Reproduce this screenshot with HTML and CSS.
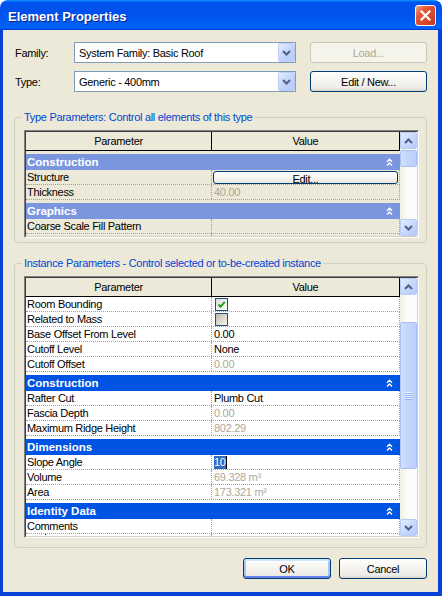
FILE: index.html
```html
<!DOCTYPE html>
<html>
<head>
<meta charset="utf-8">
<title>Element Properties</title>
<link rel="stylesheet" href="styles.css">
</head>
<body>
<div class="window">
  <div class="titlebar">
    <span class="title">Element Properties</span>
    <span class="close">
      <svg width="11" height="11" viewBox="0 0 11 11"><path d="M1.5 1.5 L9.5 9.5 M9.5 1.5 L1.5 9.5" stroke="#fff" stroke-width="2.2" stroke-linecap="square" fill="none"/></svg>
    </span>
  </div>
  <div class="client">
    <div class="form">
      <span class="lbl">Family:</span>
      <div class="combo">
        <span class="combo-text">System Family: Basic Roof</span>
        <span class="drop"><svg width="9" height="6" viewBox="0 0 9 6"><path d="M1 1 L4.5 4.5 L8 1" stroke="#4D6185" stroke-width="2" fill="none"/></svg></span>
      </div>
      <button class="btn disabled">Load...</button>
      <span class="lbl">Type:</span>
      <div class="combo">
        <span class="combo-text">Generic - 400mm</span>
        <span class="drop"><svg width="9" height="6" viewBox="0 0 9 6"><path d="M1 1 L4.5 4.5 L8 1" stroke="#4D6185" stroke-width="2" fill="none"/></svg></span>
      </div>
      <button class="btn">Edit / New...</button>
    </div>

    <fieldset class="group type-group">
      <legend>Type Parameters: Control all elements of this type</legend>
      <div class="grid">
        <div class="grid-inner">
          <div class="table readonly">
            <div class="hdr"><div class="hc">Parameter</div><div class="hc">Value</div></div>
            <div class="cat inactive"><span>Construction</span><svg width="7" height="8" viewBox="0 0 7 8"><path d="M1 3.8 L3.5 1.3 L6 3.8 M1 7.5 L3.5 5 L6 7.5" stroke="#fff" stroke-width="1.4" fill="none"/></svg></div>
            <div class="row"><div class="pc">Structure</div><div class="vc vc-btn"><span class="cellbtn">Edit...</span></div></div>
            <div class="row"><div class="pc">Thickness</div><div class="vc dis">40.00</div></div>
            <div class="cat inactive"><span>Graphics</span><svg width="7" height="8" viewBox="0 0 7 8"><path d="M1 3.8 L3.5 1.3 L6 3.8 M1 7.5 L3.5 5 L6 7.5" stroke="#fff" stroke-width="1.4" fill="none"/></svg></div>
            <div class="row"><div class="pc">Coarse Scale Fill Pattern</div><div class="vc"></div></div>
            <div class="row"><div class="pc"></div><div class="vc"></div></div>
          </div>
          <div class="vscroll">
            <div class="sb-btn"><svg width="9" height="6" viewBox="0 0 9 6"><path d="M1 5 L4.5 1.5 L8 5" stroke="#4D6185" stroke-width="2" fill="none"/></svg></div>
            <div class="thumb thumb-type"></div>
            <div class="sb-fill"></div>
            <div class="sb-btn"><svg width="9" height="6" viewBox="0 0 9 6"><path d="M1 1 L4.5 4.5 L8 1" stroke="#4D6185" stroke-width="2" fill="none"/></svg></div>
          </div>
        </div>
      </div>
    </fieldset>

    <fieldset class="group inst-group">
      <legend>Instance Parameters - Control selected or to-be-created instance</legend>
      <div class="grid">
        <div class="grid-inner">
          <div class="table">
            <div class="hdr"><div class="hc">Parameter</div><div class="hc">Value</div></div>
            <div class="row"><div class="pc">Room Bounding</div><div class="vc"><span class="chk checked"><svg width="11" height="11" viewBox="0 0 11 11"><path d="M2.5 5.5 L4.5 7.8 L8.8 2.8" stroke="#21A121" stroke-width="2" fill="none"/></svg></span></div></div>
            <div class="row"><div class="pc">Related to Mass</div><div class="vc"><span class="chk gray"></span></div></div>
            <div class="row"><div class="pc">Base Offset From Level</div><div class="vc">0.00</div></div>
            <div class="row"><div class="pc">Cutoff Level</div><div class="vc">None</div></div>
            <div class="row"><div class="pc">Cutoff Offset</div><div class="vc dis">0.00</div></div>
            <div class="cat"><span>Construction</span><svg width="7" height="8" viewBox="0 0 7 8"><path d="M1 3.8 L3.5 1.3 L6 3.8 M1 7.5 L3.5 5 L6 7.5" stroke="#fff" stroke-width="1.4" fill="none"/></svg></div>
            <div class="row"><div class="pc">Rafter Cut</div><div class="vc">Plumb Cut</div></div>
            <div class="row"><div class="pc">Fascia Depth</div><div class="vc dis">0.00</div></div>
            <div class="row"><div class="pc">Maximum Ridge Height</div><div class="vc dis">802.29</div></div>
            <div class="cat"><span>Dimensions</span><svg width="7" height="8" viewBox="0 0 7 8"><path d="M1 3.8 L3.5 1.3 L6 3.8 M1 7.5 L3.5 5 L6 7.5" stroke="#fff" stroke-width="1.4" fill="none"/></svg></div>
            <div class="row"><div class="pc">Slope Angle</div><div class="vc"><span class="sel">10</span><span class="caret"></span></div></div>
            <div class="row"><div class="pc">Volume</div><div class="vc dis">69.328 m³</div></div>
            <div class="row"><div class="pc">Area</div><div class="vc dis">173.321 m²</div></div>
            <div class="cat"><span>Identity Data</span><svg width="7" height="8" viewBox="0 0 7 8"><path d="M1 3.8 L3.5 1.3 L6 3.8 M1 7.5 L3.5 5 L6 7.5" stroke="#fff" stroke-width="1.4" fill="none"/></svg></div>
            <div class="row"><div class="pc">Comments</div><div class="vc"></div></div>
            <div class="row"><div class="pc"><span class="dot"></span></div><div class="vc"></div></div>
          </div>
          <div class="vscroll">
            <div class="sb-btn"><svg width="9" height="6" viewBox="0 0 9 6"><path d="M1 5 L4.5 1.5 L8 5" stroke="#4D6185" stroke-width="2" fill="none"/></svg></div>
            <div class="sb-gap"></div>
            <div class="thumb thumb-inst"><span class="grip"></span></div>
            <div class="sb-fill"></div>
            <div class="sb-btn"><svg width="9" height="6" viewBox="0 0 9 6"><path d="M1 1 L4.5 4.5 L8 1" stroke="#4D6185" stroke-width="2" fill="none"/></svg></div>
          </div>
        </div>
      </div>
    </fieldset>

    <div class="actions">
      <button class="btn default">OK</button>
      <button class="btn">Cancel</button>
    </div>
  </div>
</div>
</body>
</html>
```

FILE: styles.css
```css
* { box-sizing: border-box; }
html, body { margin: 0; padding: 0; background: #fff; }
body {
  font-family: "Liberation Sans", Arial, sans-serif;
  font-size: 11px;
  letter-spacing: -0.3px;
  color: #000;
}
.window {
  width: 442px;
  height: 596px;
  display: flex;
  flex-direction: column;
}
.titlebar {
  height: 30px;
  flex: none;
  display: flex;
  align-items: flex-start;
  padding: 0 6px 0 8px;
  border-radius: 8px 8px 0 0;
  background: linear-gradient(180deg, #0997ff, #0053ee 8%, #0050ee 40%, #0062f6 88%, #0062f6 93%, #005bff 95%, #003dd7 96%, #003dd7);
}
.title {
  margin-top: 9px;
  line-height: 15px;
  color: #fff;
  font-weight: bold;
  font-size: 13px;
  letter-spacing: 0;
  text-shadow: 1px 1px 0 #0a1e8c;
}
.close {
  margin-left: auto;
  margin-top: 5px;
  width: 21px;
  height: 21px;
  border: 1px solid #fff;
  border-radius: 3px;
  background: linear-gradient(135deg, #f4a489 0%, #e3593b 30%, #d94628 70%, #c0371f 100%);
  display: flex;
  align-items: center;
  justify-content: center;
}
.close svg { display: block; }
.client {
  flex: 1;
  background: #ece9d8;
  border-style: solid;
  border-color: #0843d8;
  border-width: 0 4px 4px 3px;
  padding: 12px 11px 0 11px;
  display: flex;
  flex-direction: column;
}
.form {
  display: grid;
  grid-template-columns: 46px 222px 117px;
  grid-template-rows: 21px 21px;
  column-gap: 14px;
  row-gap: 8px;
  align-items: center;
}
.lbl { padding-left: 1px; white-space: nowrap; }
.combo {
  height: 21px;
  border: 1px solid #7f9db9;
  background: #fff;
  display: flex;
  align-items: center;
}
.combo-text { flex: 1; padding-left: 4px; white-space: nowrap; }
.drop {
  width: 17px;
  height: 19px;
  flex: none;
  border: 1px solid #bccdf8;
  border-radius: 2px;
  background: linear-gradient(135deg, #e8effd 0%, #c6d6fc 45%, #b4c8f9 100%);
  display: flex;
  align-items: center;
  justify-content: center;
}
.drop svg, .sb-btn svg { display: block; }
.btn {
  height: 21px;
  font: inherit;
  letter-spacing: inherit;
  color: #000;
  padding: 0;
  border: 1px solid #003c74;
  border-radius: 3px;
  background: linear-gradient(180deg, #ffffff 0%, #f5f4f0 45%, #ecebe6 85%, #d8d2c6 100%);
}
.btn.disabled {
  border-color: #c9c7ba;
  background: #f5f4ea;
  color: #aca899;
}
.btn.default {
  box-shadow: inset 0 2px 0 #cee7ff, inset 0 -2px 0 #6982ee, inset 2px 0 0 #a9c5f5, inset -2px 0 0 #a9c5f5;
}
.group {
  margin: 0;
  border: 1px solid #d0d0bf;
  border-radius: 4px;
  min-width: 0;
}
.group legend {
  color: #0046d5;
  padding: 0 2px;
  margin-left: -2px;
  line-height: 14px;
}
.type-group { margin-top: 18px; padding: 6px 7px 4px 9px; }
.inst-group { margin-top: 13px; padding: 6px 7px 9px 9px; }
.grid {
  border: 1px solid;
  border-color: #808080 #ffffff #ffffff #808080;
}
.grid-inner {
  border: 1px solid;
  border-color: #404040 #d4d0c8 #d4d0c8 #404040;
  display: flex;
}
.table {
  flex: 1;
  min-width: 0;
  overflow: hidden;
  background: #fff;
}
.table.readonly { background: #ece9d8; }
.type-group .table, .type-group .vscroll { height: 104px; }
.inst-group .table, .inst-group .vscroll { height: 258px; }
.hdr {
  display: grid;
  grid-template-columns: 186px 1fr;
  height: 19px;
  border-bottom: 1px solid #000;
  background: #ece9d8;
}
.hc {
  text-align: center;
  line-height: 18px;
  border-right: 1px solid #000;
}
.cat {
  margin-top: 3px;
  height: 16px;
  display: flex;
  align-items: center;
  justify-content: space-between;
  padding: 0 7px 0 1px;
  color: #fff;
  font-weight: bold;
  font-size: 11.5px;
  letter-spacing: 0;
  background: #0054e3;
}
.cat.inactive { background: #7a96df; }
.cat svg { display: block; }
.row {
  display: grid;
  grid-template-columns: 186px 1fr;
  height: 15px;
  line-height: 14px;
  border-bottom: 1px dotted #a0a0a0;
  border-right: 1px dotted #a0a0a0;
}
.pc {
  padding-left: 1px;
  border-right: 1px dotted #a0a0a0;
  white-space: nowrap;
  overflow: hidden;
}
.dot {
  display: block;
  width: 1px;
  height: 1px;
  margin: 0 0 0 18px;
  background: #000;
}
.vc {
  padding-left: 2px;
  white-space: nowrap;
  overflow: hidden;
  display: flex;
  align-items: flex-start;
}
.vc.dis { color: #aca899; }
.vc-btn { padding: 0 1px 0 1px; }
.cellbtn {
  display: block;
  width: 100%;
  height: 13px;
  margin-top: 1px;
  overflow: hidden;
  text-align: center;
  line-height: 14px;
  border: 1px solid #003c74;
  border-radius: 3px;
  background: linear-gradient(180deg, #ffffff 0%, #f6f5f1 50%, #e9e7de 100%);
}
.chk {
  display: block;
  width: 13px;
  height: 13px;
  margin: 1px 0 0 1px;
  border: 1px solid #1c5180;
}
.chk svg { display: block; }
.chk.checked { background: linear-gradient(135deg, #dcdcd7 0%, #f4f4f2 60%, #ffffff 100%); }
.chk.gray { background: linear-gradient(135deg, #bdbaad 0%, #dedbcf 55%, #f3f2ea 100%); }
.sel {
  background: #316ac5;
  color: #fff;
  line-height: 13px;
  margin-top: 1px;
}
.caret {
  display: block;
  width: 1px;
  height: 13px;
  margin-top: 1px;
  background: #000;
}
.vscroll {
  width: 17px;
  flex: none;
  display: flex;
  flex-direction: column;
  background: linear-gradient(90deg, #f1efe6 0%, #fbfbf8 40%, #fefefe 100%);
}
.sb-btn {
  height: 17px;
  flex: none;
  border: 1px solid #b7cbf8;
  border-radius: 2px;
  background: linear-gradient(135deg, #e6eefd 0%, #c9d8fc 50%, #b6cbf9 100%);
  display: flex;
  align-items: center;
  justify-content: center;
}
.sb-gap { height: 27px; flex: none; }
.sb-fill { flex: 1; }
.thumb {
  flex: none;
  border: 1px solid #a9c0f4;
  border-radius: 2px;
  background: linear-gradient(90deg, #d4e0fd 0%, #c6d6fc 40%, #bccffb 100%);
  display: flex;
  align-items: center;
  justify-content: center;
}
.thumb-type { height: 17px; margin-top: 1px; }
.thumb-inst { height: 147px; }
.grip {
  display: block;
  width: 7px;
  height: 8px;
  background: repeating-linear-gradient(180deg, #eef4fe 0 1px, #8cb0f8 1px 2px);
}
.actions {
  display: flex;
  justify-content: flex-end;
  gap: 8px;
  margin-top: 10px;
}
.actions .btn { width: 88px; }
```
